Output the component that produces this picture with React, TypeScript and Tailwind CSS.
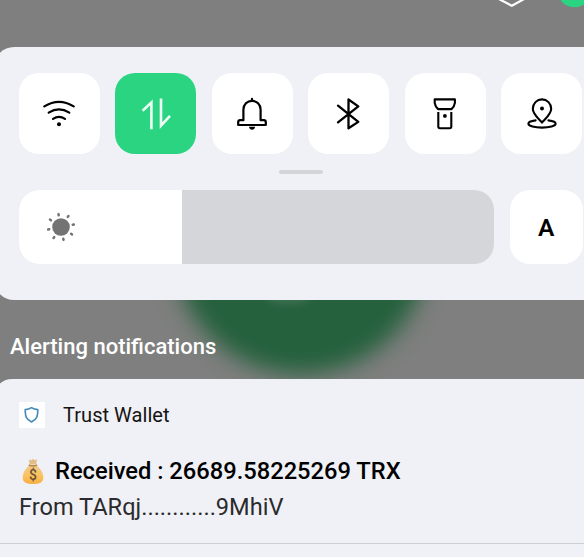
import type { ReactNode } from 'react'

interface TileProps {
  label: string
  active?: boolean
  children: ReactNode
}

function WifiIcon() {
  return (
    <svg width="34" height="34" viewBox="0 0 34 34" fill="none" stroke="currentColor" strokeWidth="2.2" strokeLinecap="round">
      <path d="M2.3 9.4Q17 0.2 31.7 9.4" />
      <path d="M6.7 15.6Q17 9 27.3 15.6" />
      <path d="M11 21.9Q17 18 23 21.9" />
      <circle cx="17" cy="27.3" r="2" fill="currentColor" stroke="none" />
    </svg>
  )
}

function DataIcon() {
  return (
    <svg width="34" height="34" viewBox="0 0 34 34" fill="none" stroke="currentColor" strokeWidth="2.6" strokeLinejoin="miter">
      <path d="M3.6 13.7L12.4 5.4V32.3" />
      <path d="M22 1.6V28.7L31 18.8" />
    </svg>
  )
}

function BellIcon() {
  return (
    <svg width="34" height="34" viewBox="0 0 34 34" fill="none" stroke="currentColor" strokeWidth="2.2" strokeLinejoin="round">
      <path d="M8.4 23.2V12.6C8.4 7.6 12.2 3.8 17 3.8S25.6 7.6 25.6 12.6V23.2H28.8Q30.8 23.2 30.8 25.2V28H3.2V25.2Q3.2 23.2 5.2 23.2Z" />
      <path d="M17 1.8V4" strokeLinecap="round" />
      <path d="M14 29.8H20.2Q19.6 32.8 17.1 32.8T14 29.8Z" fill="currentColor" stroke="none" />
    </svg>
  )
}

function BluetoothIcon() {
  return (
    <svg width="34" height="34" viewBox="0 0 34 34" fill="none" stroke="currentColor" strokeWidth="2.3" strokeLinecap="round" strokeLinejoin="round">
      <path d="M6 8.6L26.3 24.9L16.5 31.3V2.5L26.3 9.4L6 25.4" />
    </svg>
  )
}

function TorchIcon() {
  return (
    <svg width="34" height="34" viewBox="0 0 34 34" fill="none" stroke="currentColor" strokeWidth="2.1" strokeLinejoin="round">
      <path d="M6.7 2.4H26.9V5.8Q26.4 9.2 23.6 12.1H10Q7.2 9.2 6.7 5.8Z" />
      <path d="M10.3 14.9V29.6Q10.3 31.2 11.9 31.2H21.7Q23.3 31.2 23.3 29.6V14.9" />
      <circle cx="16.9" cy="18.9" r="1.9" fill="currentColor" stroke="none" />
    </svg>
  )
}

function LocationIcon() {
  return (
    <svg width="34" height="34" viewBox="0 0 34 34" fill="none" stroke="currentColor" strokeWidth="2.1" strokeLinecap="round" strokeLinejoin="round">
      <path d="M17 25.6C13 21.2 7.8 16.9 7.8 11.7A9.2 9.3 0 0 1 26.2 11.7C26.2 16.9 21 21.2 17 25.6Z" />
      <circle cx="17" cy="11.4" r="2" fill="currentColor" stroke="none" />
      <path d="M10.6 23.4C6.3 23.9 3.4 25.1 3.4 26.7C3.4 28.9 9.5 30.6 17 30.6S30.6 28.9 30.6 26.7C30.6 25.1 27.7 23.9 23.4 23.4" />
    </svg>
  )
}

function SunIcon() {
  return (
    <svg width="30" height="30" viewBox="-15 -15 30 30" className="text-[#737373]">
      <circle r="8.8" fill="currentColor" />
      <g stroke="currentColor" strokeWidth="2.5" strokeLinecap="round" transform="rotate(-11)">
        <path d="M0-12V-13.1M0 12V13.1M-12 0H-13.1M12 0H13.1" />
        <path d="M8.6-8.6L9.4-9.4M-8.6 8.6L-9.4 9.4M-8.6-8.6L-9.4-9.4M8.6 8.6L9.4 9.4" />
      </g>
    </svg>
  )
}

function MoneyBag() {
  return (
    <svg width="22" height="27" viewBox="0 0 22 27">
      <defs>
        <linearGradient id="bag" x1="0" y1="0" x2="0" y2="1">
          <stop offset="0" stopColor="#eec98a" />
          <stop offset="0.55" stopColor="#fbc35e" />
          <stop offset="1" stopColor="#f7ae43" />
        </linearGradient>
      </defs>
      <path d="M7.6 6.5L6.9 1.8L9.1 2.3L11 0.9L13 2.3L15 1.3L14.2 6.5Z" fill="#e2bd87" />
      <path d="M7.3 7.8C3.4 10.5 0.7 15 0.7 20C0.7 24.4 4.8 26 11 26S21.3 24.4 21.3 20C21.3 15 18.4 10.5 14.5 7.8Z" fill="url(#bag)" />
      <path d="M7.2 7.2Q11 8.5 14.7 7.2" fill="none" stroke="#b98748" strokeWidth="1.5" strokeLinecap="round" />
      <text x="11" y="22" textAnchor="middle" className="fill-[#6b5031] font-['Roboto'] text-[14px] font-medium">$</text>
    </svg>
  )
}

function Tile({ label, active = false, children }: TileProps) {
  return (
    <button
      aria-label={label}
      className={`flex size-[81px] shrink-0 items-center justify-center rounded-[20px] ${active ? 'bg-[#2bd481] text-[#edfff5]' : 'bg-white text-black'}`}
    >
      {children}
    </button>
  )
}

function StatusBar() {
  return (
    <div className="flex h-[47px] items-start justify-end overflow-hidden">
      <svg width="94" height="12" viewBox="490 0 94 12">
        <path d="M497-2L511.8 5.8L526-2" fill="none" stroke="#fff" strokeWidth="2.2" strokeLinejoin="round" />
        <circle cx="574.5" cy="-9.5" r="16.8" fill="#2bd481" />
      </svg>
    </div>
  )
}

function QuickSettings() {
  return (
    <section className="-mr-6 -ml-1.5 h-[253px] rounded-[20px] bg-[#f0f1f6] pt-[26px] pl-[24.5px]">
      <div className="flex gap-[15.5px]">
        <Tile label="Wi-Fi"><WifiIcon /></Tile>
        <Tile label="Mobile data" active><DataIcon /></Tile>
        <Tile label="Ring"><BellIcon /></Tile>
        <Tile label="Bluetooth"><BluetoothIcon /></Tile>
        <Tile label="Torch"><TorchIcon /></Tile>
        <Tile label="Location"><LocationIcon /></Tile>
      </div>
      <div className="mt-4 ml-[260.5px] h-1 w-11 rounded-sm bg-[#d4d5d8]" />
      <div className="mt-4 flex gap-4">
        <div className="flex h-[74px] w-[475px] shrink-0 overflow-hidden rounded-[20px] bg-[#d5d6da]">
          <div className="flex w-[163.5px] items-center bg-white pl-[27px]">
            <SunIcon />
          </div>
        </div>
        <button className="flex h-[74px] w-[73.5px] shrink-0 items-center justify-center rounded-[20px] bg-white pt-0.5 text-[24.5px] font-semibold text-black">
          A
        </button>
      </div>
    </section>
  )
}

function Notification() {
  return (
    <article className="-mr-6 -ml-1.5 grow rounded-t-[18px] bg-[#f0f1f6] pl-1.5">
      <div className="flex h-[50px] items-center pt-[22px] pl-[19px]">
        <div className="flex size-[26px] items-center justify-center bg-white">
          <svg width="16" height="18" viewBox="0 0 16 18" fill="none" stroke="#4389b9" strokeWidth="1.6" strokeLinejoin="round">
            <path d="M7.5 1.7Q10 3.6 13.8 3.6C13.8 10.8 12.9 13.2 7.5 16C2.1 13.2 1.2 10.8 1.2 3.6Q5 3.6 7.5 1.7Z" />
          </svg>
        </div>
        <span className="ml-[18px] text-[20.1px] leading-[26px] text-[#141414]">Trust Wallet</span>
      </div>
      <div className="mt-[24px] flex items-center pl-[22px]">
        <MoneyBag />
        <h2 className="ml-[11px] text-[23.7px] leading-[36px] font-medium whitespace-nowrap text-black">
          Received : 26689.58225269 TRX
        </h2>
      </div>
      <p className="pl-[19px] text-[23.6px] leading-[36px] whitespace-nowrap text-[#2b2b2d]">
        From TARqj............9MhiV
      </p>
      <div className="-ml-1.5 mt-[18px] h-px bg-[#cdced2]" />
    </article>
  )
}

export default function App() {
  return (
    <main className="relative isolate flex h-[557px] w-[584px] flex-col overflow-hidden bg-[#7e7f7e] font-['Roboto',sans-serif]">
      {/* wallpaper glow behind the shade */}
      <div className="absolute top-[118px] left-[173px] -z-10 size-[256px] rounded-full bg-[#25613d] blur-[11px]" />
      <div className="absolute top-[281px] left-[267px] -z-10 h-[20px] w-[42px] rounded-full bg-[#4d7a5e] blur-[6px]" />
      <StatusBar />
      <QuickSettings />
      <h1 className="h-[79px] pt-[34px] pl-[10px] text-[22px] leading-[26px] font-medium text-white">
        Alerting notifications
      </h1>
      <Notification />
    </main>
  )
}
